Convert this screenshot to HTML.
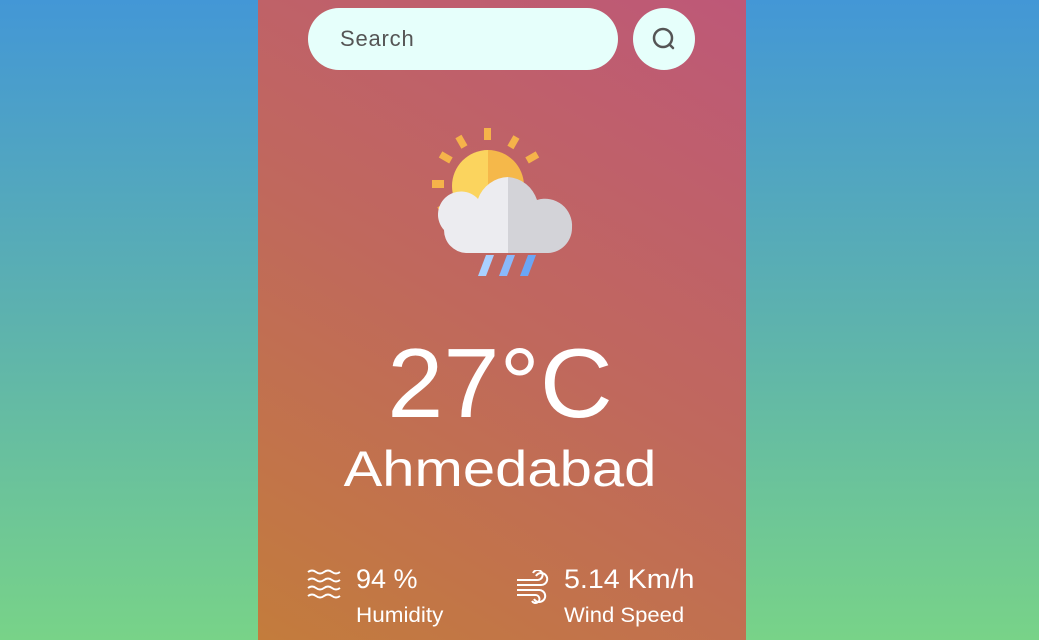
<!DOCTYPE html>
<html><head><meta charset="utf-8"><style>
*{margin:0;padding:0;box-sizing:border-box}
body{width:1039px;height:640px;overflow:hidden;background:linear-gradient(180deg,#4397d6 0%,#5db2ae 50%,#78d388 100%);font-family:"Liberation Sans",sans-serif;position:relative}
.card{position:absolute;left:258px;top:0;width:488px;height:640px;background:linear-gradient(30deg,#c37c3c 0%,#c0685d 50%,#be5878 100%)}
.search{position:absolute;left:50px;top:8px;width:310px;height:62px;border-radius:31px;background:#e6fffb;color:#555;font-size:22px;line-height:62px;padding-left:32px;letter-spacing:0.8px}
.btn{position:absolute;left:375px;top:8px;width:62px;height:62px;border-radius:50%;background:#e6fffb}
.t{position:absolute;color:#fff;white-space:nowrap}
</style></head><body>
<div class="card">
<div class="search">Search</div>
<div class="btn"><svg width="62" height="62" viewBox="0 0 62 62"><circle cx="30" cy="30" r="9" fill="none" stroke="#555" stroke-width="2.5"/><line x1="36.5" y1="36.5" x2="40" y2="40" stroke="#555" stroke-width="2.5" stroke-linecap="round"/></svg></div>
<svg style="position:absolute;left:162px;top:120px" width="170" height="170" viewBox="0 0 170 170">
<g fill="#f5b34a">
<rect x="64" y="8" width="7" height="12"/>
<rect x="38" y="16" width="7" height="12" transform="rotate(-30 41 22)"/>
<rect x="90" y="16" width="7" height="12" transform="rotate(30 93 22)"/>
<rect x="20" y="34" width="12" height="7" transform="rotate(30 26 37)"/>
<rect x="106" y="34" width="12" height="7" transform="rotate(-30 112 37)"/>
<rect x="12" y="60" width="12" height="8"/>
<rect x="18" y="84" width="12" height="7" transform="rotate(-30 24 87)"/>
</g>
<path d="M68 30 A36 36 0 0 0 68 102Z" fill="#fbd45e"/>
<path d="M68 30 A36 36 0 0 1 68 102Z" fill="#f5b84a"/>
<path d="M88 57 A33 33 0 0 0 58 79 A22 22 0 0 0 24 110 A23 23 0 0 0 46 133 L88 133Z" fill="#ececf0"/>
<path d="M88 57 A33 33 0 0 1 117 80 A27 27 0 0 1 152 108 A25 25 0 0 1 128 133 L88 133Z" fill="#d3d3d8"/>
<path d="M66 135 L74 135 L66 156 L58 156Z" fill="#a9d0ff"/>
<path d="M87 135 L95 135 L87 156 L79 156Z" fill="#8ab9fa"/>
<path d="M108 135 L116 135 L108 156 L100 156Z" fill="#6aa6f5"/>
</svg>
<div class="t" style="left:0;width:488px;text-align:center;top:327px;font-size:98px;transform:translateX(-2px) scaleX(1.03)">27°C</div>
<div class="t" style="left:0;width:488px;text-align:center;top:440px;font-size:50px;transform:translateX(-2px) scaleX(1.16)">Ahmedabad</div>
<svg style="position:absolute;left:48px;top:568px" width="36" height="34" viewBox="0 0 36 34" fill="none" stroke="#fff" stroke-width="2">
<path d="M2 4 q4-3 8 0 t8 0 t8 0 t8 0"/><path d="M2 12 q4-3 8 0 t8 0 t8 0 t8 0"/><path d="M2 20 q4-3 8 0 t8 0 t8 0 t8 0"/><path d="M2 28 q4-3 8 0 t8 0 t8 0 t8 0"/></svg>
<div class="t" style="left:98px;top:564px;font-size:27px">94 %</div>
<div class="t" style="left:98px;top:604px;font-size:21px;transform-origin:left;transform:scaleX(1.07)">Humidity</div>
<svg style="position:absolute;left:257px;top:570px" width="36" height="34" viewBox="0 0 36 34" fill="none" stroke="#fff" stroke-width="2">
<path d="M2 10 H22 a5 5 0 1 0 -4 -7"/><path d="M2 15 H26 a6 6 0 1 0 -5 -9"/><path d="M2 20 H24 a6 6 0 1 1 -5 9"/><path d="M2 25 H20 a4 4 0 1 1 -3 6"/></svg>
<div class="t" style="left:306px;top:564px;font-size:27px;transform-origin:left;transform:scaleX(1.06)">5.14 Km/h</div>
<div class="t" style="left:306px;top:604px;font-size:21px;transform-origin:left;transform:scaleX(1.05)">Wind Speed</div>
</div>
</body></html>
